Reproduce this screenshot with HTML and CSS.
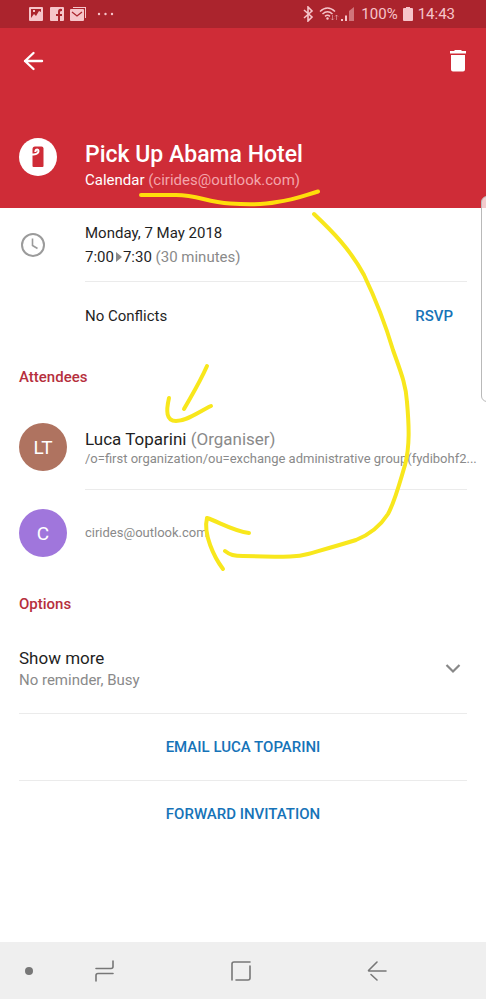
FILE: index.html
```html
<!DOCTYPE html>
<html lang="en">
<head>
<meta charset="utf-8">
<meta name="viewport" content="width=device-width, initial-scale=1">
<title>Pick Up Abama Hotel</title>
<link rel="stylesheet" href="styles.css">
</head>
<body>
<div class="screen">
  <div class="status">
    <div class="status-group">
      <svg width="88" height="16" viewBox="0 0 88 16" aria-hidden="true">
        <path fill="currentColor" fill-rule="evenodd" d="M1 1h12q1 0 1 1v12q0 1-1 1H1q-1 0-1-1V2q0-1 1-1zM2 3v9l3-4 2 2 3-5 2 1V3zM4 4h2v2H4z"/>
        <path fill="currentColor" d="M22 1h12q1 0 1 1v12q0 1-1 1h-3v-5h2V8h-2V6q0-1 2-1V3q-4-1-4 3v2h-2v2h2v5h-7q-1 0-1-1V2q0-1 1-1z"/>
        <path fill="currentColor" d="M44 1h13v11h-1V2H44zM42 3h12q1 0 1 1v10q0 1-1 1H42q-1 0-1-1V4q0-1 1-1z"/>
        <path fill="none" stroke="#ab242d" stroke-width="1.300" d="M43 6l5 4 5-4"/>
        <g fill="currentColor"><circle cx="70" cy="8" r="1.200"/><circle cx="76.500" cy="8" r="1.200"/><circle cx="83" cy="8" r="1.200"/></g>
      </svg>
    </div>
    <div class="status-group">
      <svg width="54" height="16" viewBox="0 0 54 16" aria-hidden="true">
        <path fill="none" stroke="currentColor" stroke-width="1.600" d="M2 4l8 7-4 4V1l4 4-8 7"/>
        <g fill="none" stroke="currentColor" stroke-width="1.500"><path d="M18 5.500q7.500-7 15 0M20.500 8q5-4.500 10 0M23 10.300q2.500-2 5 0"/></g>
        <circle cx="25.500" cy="12.500" r="1.200" fill="currentColor"/>
        <path fill="none" stroke="currentColor" opacity=".5" d="M30.500 9v5m-1.500-1.500l1.500 1.500 1.500-1.500M34.500 14V9m-1.500 1.500L34.500 9l1.500 1.500"/>
        <path fill="currentColor" d="M39 13h2v2h-2zM43 9.500h2V15h-2z"/>
        <path fill="currentColor" opacity=".5" d="M47 5l5-4v14h-5z"/>
      </svg>
      <span>100%</span>
      <svg width="10" height="16" viewBox="0 0 10 16" aria-hidden="true"><path fill="currentColor" d="M3 1h4v1h2q1 0 1 1v11q0 1-1 1H1q-1 0-1-1V3q0-1 1-1h2z"/></svg>
      <span>14:43</span>
    </div>
  </div>

  <header class="header">
    <div class="toolbar">
      <button class="icon-button" type="button" aria-label="Back">
        <svg width="28" height="28" viewBox="0 0 28 28"><path fill="none" stroke="currentColor" stroke-width="2.400" stroke-linecap="round" stroke-linejoin="round" d="M14.500 6L6 14l8.500 8M6 14h17"/></svg>
      </button>
      <button class="icon-button" type="button" aria-label="Delete">
        <svg width="28" height="28" viewBox="0 0 28 28"><path fill="currentColor" d="M11 3h6l1 1h4v2.500H6V4h4zM7 8h14v14.500q0 2-2 2H9q-2 0-2-2z"/></svg>
      </button>
    </div>
    <div class="row heading">
      <svg width="38" height="38" viewBox="0 0 38 38" aria-hidden="true">
        <circle cx="19" cy="19" r="19" fill="#fff"/>
        <path fill="#cf2c37" d="M16 8.500h6.500q2 0 2 2V28q0 1-1 1h-9q-1 0-1-1V11q0-2.500 2.500-2.500z"/>
        <path fill="none" stroke="#fff" stroke-width="2" d="M12.500 16.500h2q5-.5 5-3.500 0-1.500-1.200-1.500-1.800 0-2 2.500"/>
      </svg>
      <div class="main">
        <h1 class="title">Pick Up Abama Hotel</h1>
        <p class="text">Calendar <span class="pale">(cirides@outlook.com)</span></p>
      </div>
    </div>
  </header>

  <main class="content">
    <section class="row when">
      <div class="lead">
        <svg class="clock" width="28" height="28" viewBox="0 0 28 28" aria-hidden="true"><circle cx="14" cy="14" r="11" fill="none" stroke="currentColor" stroke-width="2"/><path fill="none" stroke="currentColor" stroke-width="1.600" d="M13.500 7.500v7l5 3"/></svg>
      </div>
      <div class="main ruled when-text">
        <p class="text">Monday, 7 May 2018</p>
        <p class="text">7:00<svg class="to" width="9" height="10" viewBox="0 0 9 10" role="img" aria-label="to"><path fill="currentColor" d="M2 0l6 5-6 5z"/></svg>7:30 <span class="muted">(30 minutes)</span></p>
      </div>
    </section>
    <section class="row conflicts">
      <div class="lead"></div>
      <div class="main split">
        <p class="text">No Conflicts</p>
        <button class="action" type="button">RSVP</button>
      </div>
    </section>

    <h2 class="section">Attendees</h2>
    <ul class="people">
      <li class="row person">
        <div class="lead"><span class="avatar brown">LT</span></div>
        <div class="main ruled person-text organiser">
          <p class="name">Luca Toparini <span class="muted">(Organiser)</span></p>
          <p class="address">/o=first organization/ou=exchange administrative group(fydibohf2...</p>
        </div>
      </li>
      <li class="row person">
        <div class="lead"><span class="avatar purple">C</span></div>
        <div class="main person-text"><p class="address">cirides@outlook.com</p></div>
      </li>
    </ul>

    <h2 class="section">Options</h2>
    <button class="more" type="button">
      <span class="more-text"><span class="name">Show more</span><span class="text muted">No reminder, Busy</span></span>
      <svg width="28" height="28" viewBox="0 0 28 28" aria-hidden="true"><path fill="none" stroke="#888" stroke-width="2.200" d="M7.500 9l6.500 6.500L20.500 9"/></svg>
    </button>
    <button class="action wide" type="button">EMAIL LUCA TOPARINI</button>
    <button class="action wide" type="button">FORWARD INVITATION</button>
  </main>

  <nav class="nav" aria-label="System">
    <span class="dot"></span>
    <div class="nav-buttons">
      <button class="icon-button" type="button" aria-label="Recent apps"><svg width="28" height="28" viewBox="0 0 28 28"><path fill="none" stroke="currentColor" stroke-width="1.600" stroke-linecap="round" d="M5 11.500h15q2 0 2-2V4M22 16.500H7q-2 0-2 2V24"/></svg></button>
      <button class="icon-button" type="button" aria-label="Home"><svg width="28" height="28" viewBox="0 0 28 28"><path fill="none" stroke="currentColor" stroke-width="1.600" stroke-linecap="round" d="M5 23V7q0-2 2-2h16M23 9v12q0 2-2 2H9"/></svg></button>
      <button class="icon-button" type="button" aria-label="Back"><svg width="28" height="28" viewBox="0 0 28 28"><path fill="none" stroke="currentColor" stroke-width="1.600" stroke-linecap="round" stroke-linejoin="round" d="M14 5l-8.500 8.500q0 .5.500.5h17M8 17.500l6 5.500"/></svg></button>
    </div>
  </nav>

  <div class="edge-handle"></div>
  <svg class="ink" width="486" height="999" viewBox="0 0 486 999" aria-hidden="true">
    <g fill="none" stroke-linecap="round" stroke-linejoin="round">
      <path stroke="#ffde0b" stroke-width="4" d="M141 195H176C198 195 206 202 230 203.500C250 205 262 205 277 202C294 200 300 197 318 191.500"/>
      <g stroke="#f8e71c" stroke-width="4">
        <path d="M314 214C332 231 350 249 364 275C376 300 385 323 393 350C400 370 406 384 407 402C409 425 410 446 405 465C399 485 395 501 388 514C379 528 366 536 356 540C340 545 322 550 308 554C294 558 280 556.500 243 556C234 556 230 555 225 551"/>
        <path d="M249 533C233 531 219 522 207 518C203 534 214 557 223 569"/>
        <path d="M207 366C200 382 192 395 184 409M169 398C166 411 166 421 176 421C187 421 198 412 211 406"/>
      </g>
    </g>
  </svg>
</div>
</body>
</html>
```
FILE: styles.css
```css
* { box-sizing: border-box; }

body {
  margin: 0;
  background: #fff;
  color: #1f1f1f;
  font-family: Roboto, "Liberation Sans", sans-serif;
  font-size: 15px;
}

h1, h2, p, ul { margin: 0; padding: 0; }
ul { list-style: none; }

button {
  padding: 0;
  border: 0;
  background: none;
  color: inherit;
  font: inherit;
  cursor: pointer;
}

svg { display: block; flex: none; }

.screen {
  position: relative;
  display: flex;
  flex-direction: column;
  min-height: 100vh;
  overflow: hidden;
}

.status {
  display: flex;
  align-items: center;
  justify-content: space-between;
  height: 28px;
  padding: 0 31px 0 29px;
  background: #ab242d;
  color: #f6c5ca;
  font-size: 15px;
}

.status-group { display: flex; align-items: center; gap: 5px; }

.header {
  padding: 19px 14px 16px 19px;
  background: #cf2c37;
  color: #fff;
}

.toolbar { display: flex; justify-content: space-between; }
.icon-button { width: 28px; height: 28px; }

.row { display: grid; grid-template-columns: 66px minmax(0, 1fr); }
.heading { margin-top: 63px; align-items: start; }

.title {
  padding-top: 4px;
  font-size: 23px;
  font-weight: 500;
  line-height: 26px;
}

.text { font-size: 15px; line-height: 24px; }
.pale { color: #f3a5ab; }
.muted { color: #8a8a8a; }

.content { flex: 1; padding: 0 19px; }
.lead { display: flex; align-items: center; }
.ruled { border-bottom: 1px solid #ebebeb; }

.when-text { padding: 13px 0 12px; }
.clock { color: #9b9b9b; }
.to { display: inline-block; color: #8a8a8a; }

.split {
  display: flex;
  align-items: center;
  justify-content: space-between;
  height: 67px;
  padding-right: 14px;
}

.action {
  color: #1673b8;
  font-size: 15px;
  font-weight: 500;
}

.section {
  padding-top: 1px;
  color: #b62f3d;
  font-size: 15px;
  font-weight: 500;
  line-height: 54px;
}

.person { height: 86px; }

.person-text {
  display: flex;
  flex-direction: column;
  justify-content: center;
}

.organiser { padding-top: 5px; }

/* Long addresses may run on into the page margin before they are cut */
.organiser .address { margin-right: -14px; }

.avatar {
  display: grid;
  place-items: center;
  width: 48px;
  height: 48px;
  border-radius: 50%;
  color: #fff;
  font-size: 19px;
}

.brown { background: #af7360; }
.purple { background: #a076dc; }

.name { font-size: 17px; line-height: 20px; }

.address {
  overflow: hidden;
  color: #8a8a8a;
  font-size: 13px;
  line-height: 20px;
  text-overflow: ellipsis;
  white-space: nowrap;
}

.more {
  display: flex;
  align-items: center;
  justify-content: space-between;
  width: 100%;
  height: 82px;
  padding-bottom: 4px;
  text-align: left;
}

.more-text { display: flex; flex-direction: column; }

.wide {
  display: block;
  width: 100%;
  height: 67px;
  border-top: 1px solid #ebebeb;
}

.nav {
  display: flex;
  align-items: center;
  gap: 58px;
  height: 57px;
  padding: 0 95px 0 25px;
  background: #efefef;
  color: #777;
}

.nav-buttons {
  display: flex;
  flex: 1;
  justify-content: space-between;
}

.dot {
  width: 8px;
  height: 8px;
  border-radius: 50%;
  background: #777;
}

/* Pull-out handle of the side panel, over the page's right edge */
.edge-handle {
  position: absolute;
  top: 196px;
  right: -10px;
  width: 15px;
  height: 206px;
  border: 1px solid #b9b9b9;
  border-radius: 6px;
  background: rgba(255, 255, 255, 0.75);
}

/* Freehand marks drawn over the page */
.ink {
  position: absolute;
  top: 0;
  left: 0;
  pointer-events: none;
}
```
